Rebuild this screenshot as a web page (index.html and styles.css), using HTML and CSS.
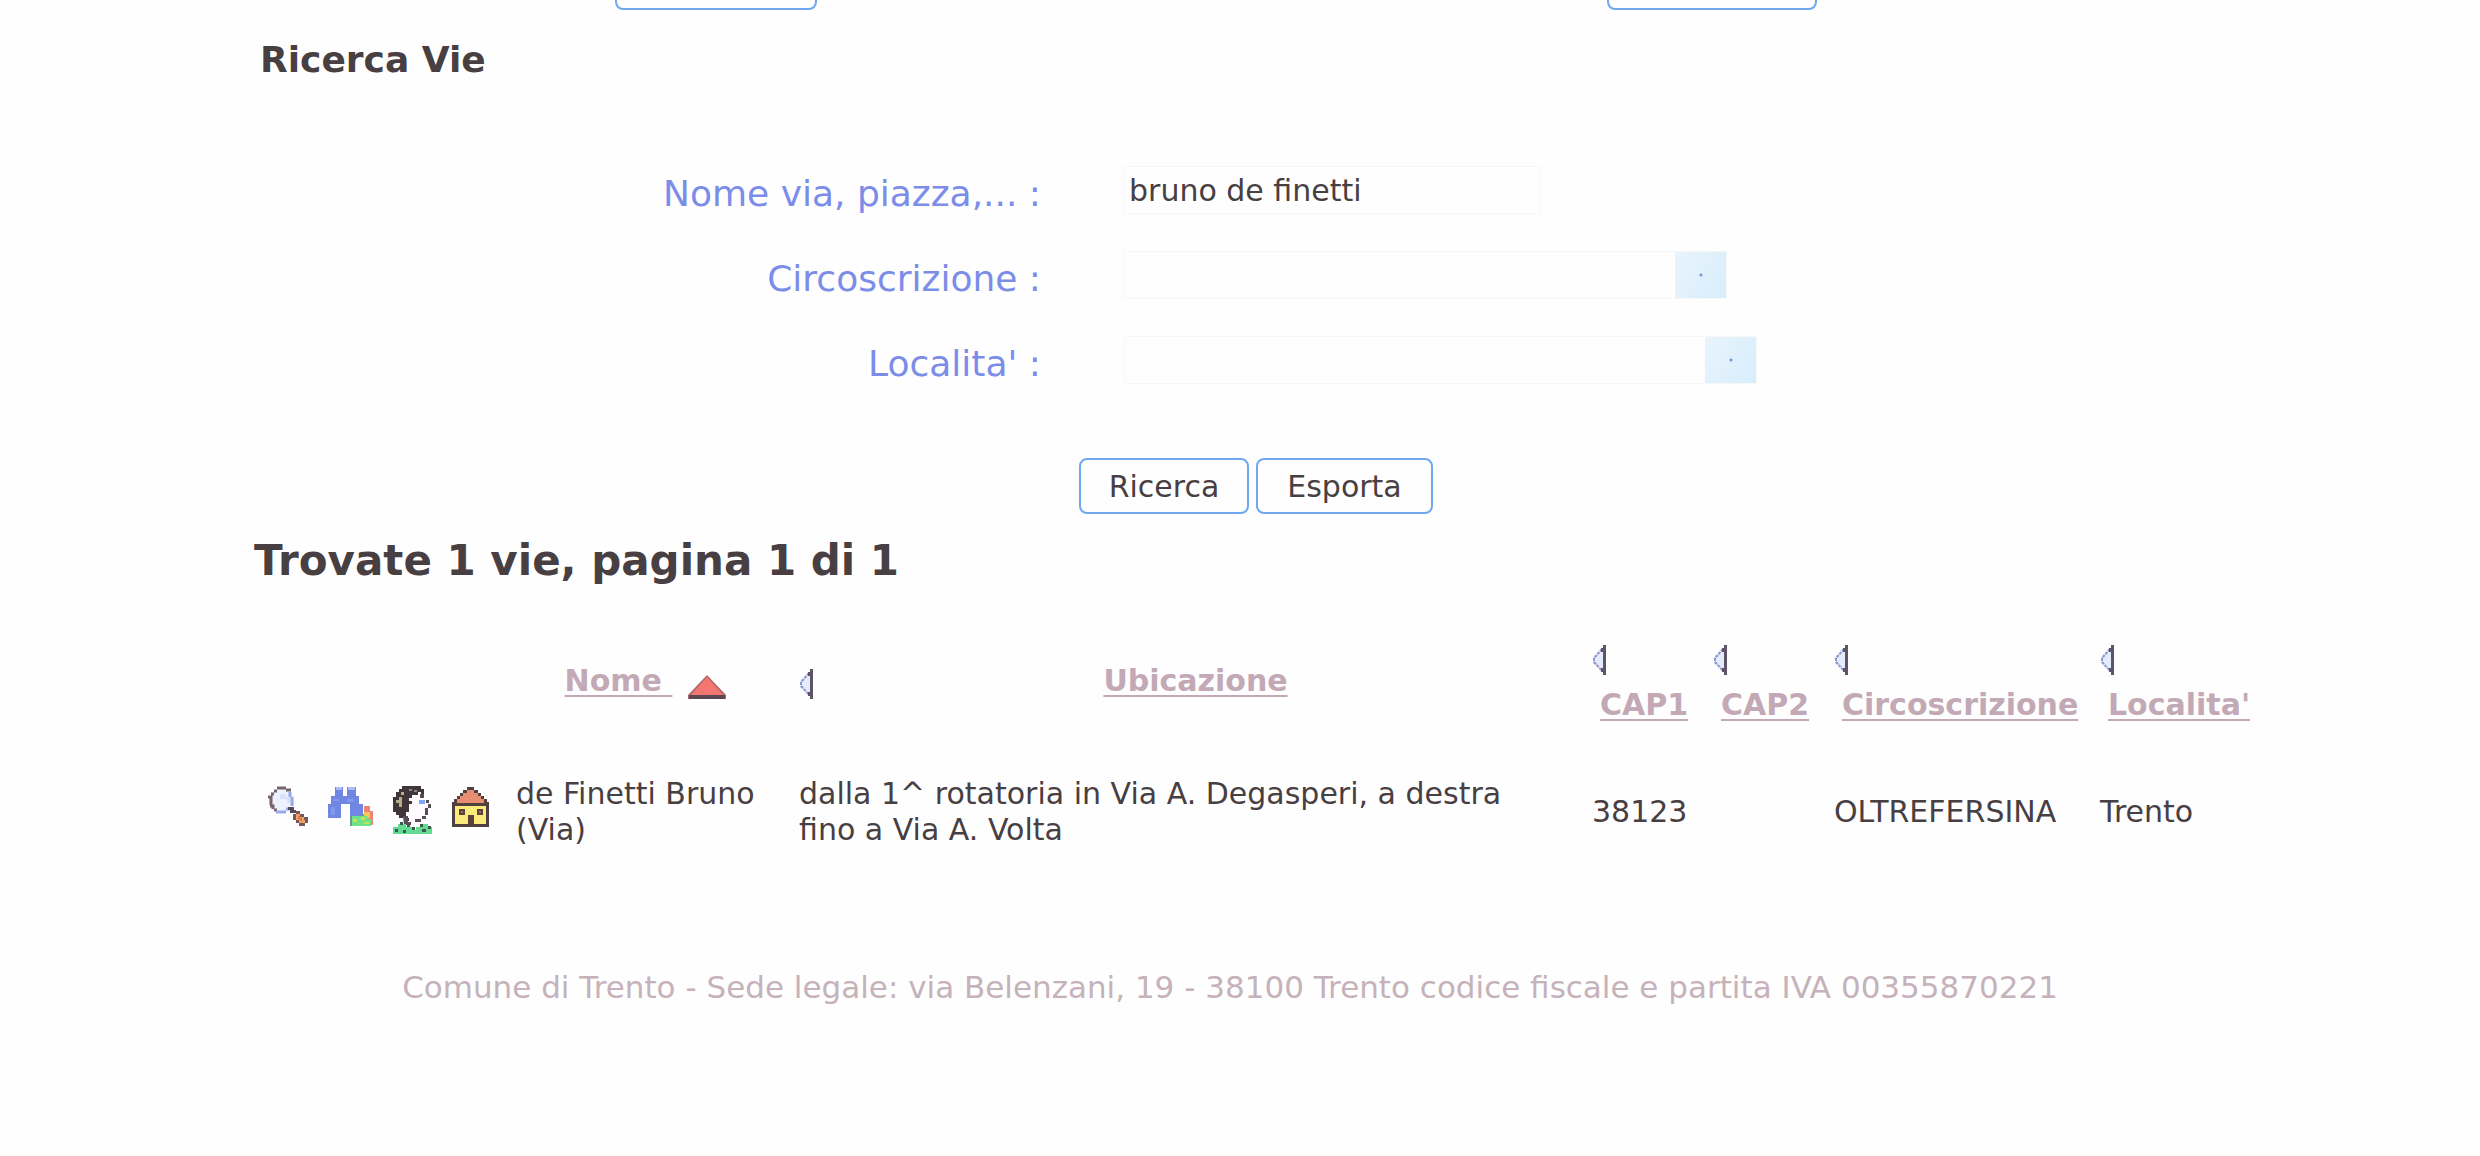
FILE: index.html
```html
<!DOCTYPE html>
<html lang="it">
<head>
<meta charset="utf-8">
<title>Ricerca Vie</title>
<link rel="stylesheet" href="styles.css">
</head>
<body>
<svg class="sprite" aria-hidden="true">
  <symbol id="sort" viewBox="0 0 14 30">
    <path d="M12 2L2 13v4l10 11z" fill="#e4ecfb"/>
    <path d="M10 4L2 13v4l8 9" fill="none" stroke="#8d95cf" stroke-width="2" stroke-dasharray="3 1"/>
    <path d="M11 0h3v30h-3v-3h-2v-4h2V7H9V3h2z" fill="#5d5468"/>
  </symbol>
</svg>
<nav class="topbar">
  <button class="btn top-first" type="button" aria-label="Indietro"></button>
  <button class="btn top-second" type="button" aria-label="Avanti"></button>
</nav>
<main class="page">
  <h1 class="title">Ricerca Vie</h1>
  <form class="search">
    <div class="fields">
      <label for="nome">Nome via, piazza,... :</label>
      <input class="field name" id="nome" type="text" value="bruno de finetti">
      <label for="circ">Circoscrizione :</label>
      <select class="field circ" id="circ"><option></option></select>
      <label for="loc">Localita' :</label>
      <select class="field loc" id="loc"><option></option></select>
    </div>
    <div class="actions">
      <button class="btn find" type="button">Ricerca</button>
      <button class="btn export" type="button">Esporta</button>
    </div>
  </form>
  <h2 class="summary">Trovate 1 vie, pagina 1 di 1</h2>
  <table class="results">
    <colgroup>
      <col class="c-icons"><col class="c-name"><col class="c-place"><col class="c-cap"><col class="c-cap"><col class="c-circ"><col class="c-loc">
    </colgroup>
    <thead>
      <tr>
        <td></td>
        <th scope="col"><div class="head sorted"><a href="#">Nome&nbsp;</a><svg class="up" viewBox="0 0 38 24" aria-hidden="true"><path d="M19 0L38 20v4H0v-4z" fill="#b06a70"/><path d="M19 2L35 20H3z" fill="#f47670"/><path d="M1 20h36v4H1z" fill="#5a4854"/></svg></div></th>
        <th scope="col"><div class="head wide"><svg class="sort" aria-hidden="true"><use href="#sort"/></svg><a href="#">Ubicazione</a></div></th>
        <th scope="col"><div class="head stack"><svg class="sort" aria-hidden="true"><use href="#sort"/></svg><a href="#">CAP1</a></div></th>
        <th scope="col"><div class="head stack"><svg class="sort" aria-hidden="true"><use href="#sort"/></svg><a href="#">CAP2</a></div></th>
        <th scope="col"><div class="head stack"><svg class="sort" aria-hidden="true"><use href="#sort"/></svg><a href="#">Circoscrizione</a></div></th>
        <th scope="col"><div class="head stack"><svg class="sort" aria-hidden="true"><use href="#sort"/></svg><a href="#">Localita'</a></div></th>
      </tr>
    </thead>
    <tbody>
      <tr>
        <td>
          <div class="tools">
            <a href="#" aria-label="Dettaglio"><svg class="lens" viewBox="0 0 42 40">
              <path d="M11 3h9v2h5v4h3v11h-3v4h-4v3H11v-3H6v-4H3v-9h3V6h5z" fill="#eef1ff"/>
              <path d="M11 2h9M8 5h3M20 4h5M5 8h3M2 11h3v8M4 20h3v3M8 24h3" fill="none" stroke="#77656c" stroke-width="3"/>
              <path d="M10 26h10M20 23h4M26 20v-9M24 11v-5" fill="none" stroke="#98a9e8" stroke-width="3"/>
              <path d="M14 8h6v3h4v6h-3v-4h-7z" fill="#d9e0fb"/>
              <path d="M22 21h6v3h2v3h-6v-3h-2z" fill="#534a5c"/>
              <path d="M30 25h4v3h4v3h4v6h-3v3h-6v-3h-3v-3h-3v-6h3z" fill="#76585a"/>
              <path d="M30 28h4v3h4v3h1v3h-6v-3h-3z" fill="#f3a168"/>
              <path d="M32 30h2v2h2v3h-2v-2h-2z" fill="#d87848"/>
            </svg></a>
            <a href="#" aria-label="Cerca sulla mappa"><svg class="bino" viewBox="0 0 45 40">
              <path d="M7 1h8v9h4V1h9v9h3v8h4v12H22V18h-9v14H0V18h3v-8h4z" fill="#6f86e2"/>
              <path d="M8 1h6v3H8zM20 1h7v3h-7z" fill="#aebcf6"/>
              <path d="M5 13h6v2H5zM19 13h7v3h-7zM3 21h4v8H3z" fill="#8298ec"/>
              <path d="M36 20h6v5h3v14h-6V28h-3z" fill="#ee8378"/>
              <path d="M36 26h6v6h-6z" fill="#f2c95c"/>
              <path d="M23 30h16v3h4v7H22v-7h1z" fill="#6fe38a"/>
              <path d="M25 33h4v3h-4zM33 31h4v3h-4zM36 36h5v2h-5z" fill="#c3e35f"/>
              <path d="M22 30h2v10h-2zM33 28h3v2h-3z" fill="#6c9a8b"/>
            </svg></a>
            <a href="#" aria-label="Biografia"><svg class="face" viewBox="0 0 39 48">
              <path d="M17 8h14v8h4v16h-5v7H16V27h-3V14h4z" fill="#fffafd"/>
              <path d="M9 0h19v3h3v6h-3V6h-3v3h-6v3h-3v3h3v3h-3v8h-3v6h3v3h-5v-3H6v-3H3v-3H0V11h3V6h3V3h3z" fill="#40363a"/>
              <path d="M6 11h3v10H6V17H3v-3h3zM8 6h3v3H8z" fill="#b7ae86"/>
              <path d="M16 3h3v2h-3zM21 4h3v2h-3z" fill="#8c8587"/>
              <path d="M10 30h5v6h3v3h-7zM27 8h4v4h-4zM35 18h3v4h-3zM32 22h3v7h-3zM29 30h4v3h-4zM22 33h6v3h-6zM33 14h3v3h-3z" fill="#584e55"/>
              <path d="M26 14h6v4h-6z" fill="#80a9f5"/>
              <path d="M5 38h8v3h6v3h4v-3h5v-3h7v3h4v7H0v-7h5z" fill="#62dc92"/>
              <path d="M7 36h3v3H7zM14 38h3v3h-3zM19 41h3v3h-3zM27 38h3v3h-3zM10 44h3v3h-3zM29 43h4v3h-4zM2 43h3v3H2zM35 40h3v3h-3z" fill="#3d5a50"/>
            </svg></a>
            <a href="#" aria-label="Numeri civici"><svg class="house" viewBox="0 0 37 41">
              <path d="M15 1h7v3h4v3h3v3h3v3h3v3h2v25H0V16h2v-3h3v-3h3V7h3V4h4z" fill="#50403f"/>
              <path d="M15 4h7v3h4v3h3v3h3v4H5v-4h3v-3h3V7h4z" fill="#e78e70"/>
              <path d="M3 20h31v18H3z" fill="#fbea7c"/>
              <path d="M7 23h6v6H7zM25 23h6v6h-6zM16 29h6v9h-6z" fill="#5b4238"/>
              <path d="M9 25h2v2H9zM27 25h2v2h-2z" fill="#9d7054"/>
            </svg></a>
          </div>
        </td>
        <td class="name-cell">de Finetti Bruno (Via)</td>
        <td class="place-cell">dalla 1^ rotatoria in Via A. Degasperi, a destra fino a Via A. Volta</td>
        <td>38123</td>
        <td></td>
        <td>OLTREFERSINA</td>
        <td>Trento</td>
      </tr>
    </tbody>
  </table>
  <footer class="footer">Comune di Trento - Sede legale: via Belenzani, 19 - 38100 Trento codice fiscale e partita IVA 00355870221</footer>
</main>
</body>
</html>
```
FILE: styles.css
```css
* { box-sizing: border-box; }

body {
  margin: 0;
  background: #fefefe;
  color: #483f43;
  font-family: Verdana, "DejaVu Sans", sans-serif;
  font-size: 30px;
  line-height: 36px;
}

.sprite { display: none; }

.btn {
  height: 56px;
  padding: 2px 0 0;
  border: 2px solid #70a8ee;
  border-radius: 8px;
  background: #fefefe;
  color: inherit;
  font: inherit;
}

/* Only the lower edge of the menu buttons stays in view */
.topbar {
  display: flex;
  align-items: flex-end;
  gap: 790px;
  height: 10px;
  padding-left: 615px;
  overflow: hidden;
}
.top-first { width: 202px; }
.top-second { width: 210px; }

.page { padding: 0 222px 0 254px; }

.title {
  margin: 0;
  padding: 28px 6px 0;
  font-size: 36px;
  line-height: 44px;
}

.search { padding-top: 84px; }

.fields {
  display: grid;
  grid-template-columns: 787fr 1134fr;
  grid-auto-rows: 48px;
  gap: 37px 83px;
  align-items: center;
}
.fields label {
  color: #7b8de8;
  font-size: 36px;
  line-height: 48px;
  text-align: right;
  padding-top: 8px;
}

.field {
  height: 48px;
  border: 1px solid #f8f7f8;
  border-radius: 0;
  background: #fefefe;
  color: inherit;
  font: inherit;
}
.name { width: 416px; padding: 0 4px; }
select.field {
  appearance: none;
  background:
    radial-gradient(circle, #6f9fdc 0 1px, transparent 2px) right 22px center / 6px 6px no-repeat,
    linear-gradient(120deg, #e8f4fd, #d8edfb) right / 51px 100% no-repeat,
    #fefefe;
}
.circ { width: 603px; }
.loc { width: 633px; }

.actions {
  display: flex;
  justify-content: center;
  gap: 7px;
  padding-top: 74px;
}
.find { width: 170px; }
.export { width: 177px; }

.summary {
  margin: 0;
  padding-top: 22px;
  font-size: 42px;
  line-height: 50px;
}

.results {
  width: calc(100% - 8px);
  margin-top: 53px;
  border-collapse: collapse;
  table-layout: fixed;
}
.c-icons { width: 262px; }
.c-name { width: 283px; }
.c-cap { width: 121px; }
.c-circ { width: 266px; }
.c-loc { width: 150px; }

.results td { padding: 0; }
.results th {
  height: 90px;
  padding: 0;
  white-space: nowrap;
}
.results tbody td { height: 166px; }
.results td.name-cell { padding-right: 30px; }
.results td.place-cell { padding-right: 70px; }

.head { display: flex; align-items: center; }
.head a {
  color: #c2a9b5;
  text-decoration-thickness: 2px;
  text-underline-offset: 4px;
}
.sorted { justify-content: center; gap: 16px; padding-right: 24px; }
.sorted a, .wide a { padding-bottom: 6px; }
.wide a { flex: 1; padding-right: 14px; text-align: center; }
.stack { flex-direction: column; align-items: flex-start; gap: 12px; }
.stack a { padding-left: 8px; }

.sort { width: 14px; height: 30px; }
.up { width: 38px; height: 24px; margin-top: 6px; }

.tools { display: flex; gap: 20px; padding: 0 0 4px 12px; }
.tools a { display: flex; }
.lens { width: 42px; height: 40px; }
.bino { width: 45px; height: 40px; }
.face { width: 39px; height: 48px; }
.house { width: 37px; height: 41px; }

.footer {
  padding: 74px 52px 0 0;
  color: #c5b2ba;
  font-size: 31px;
  text-align: center;
}
```
